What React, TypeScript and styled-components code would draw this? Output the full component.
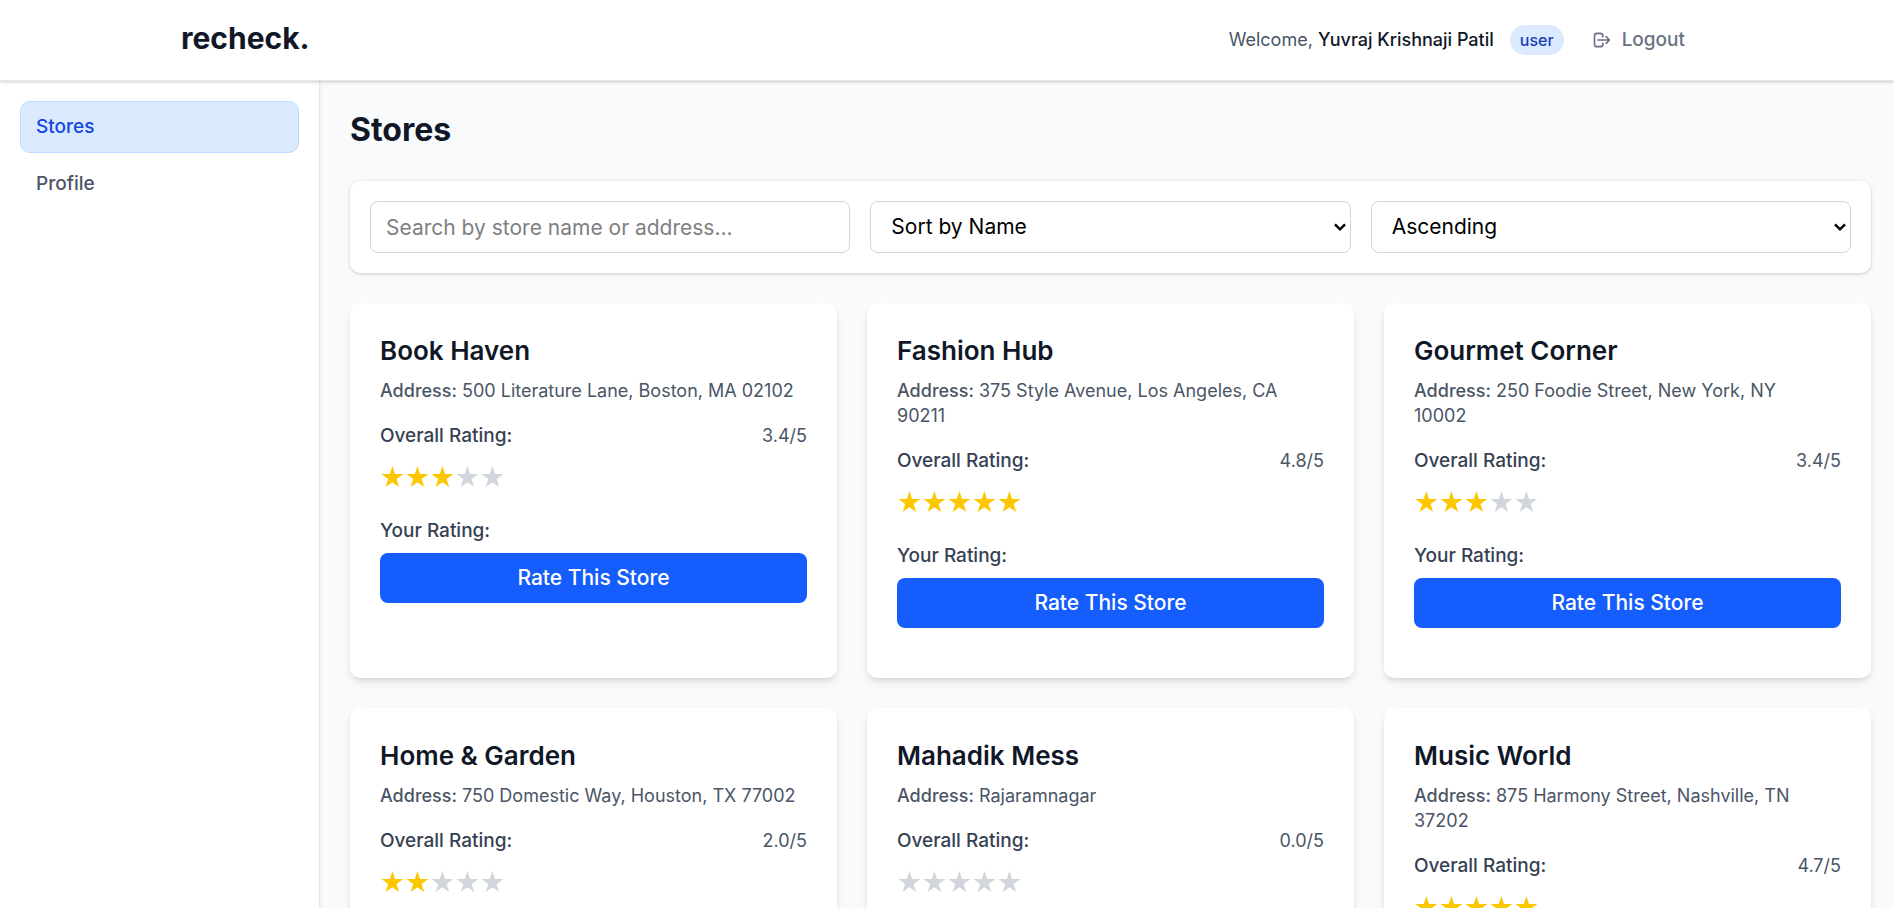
import React, { useState } from "react";
import styled, { createGlobalStyle } from "styled-components";

const GlobalStyle = createGlobalStyle`
  *, *::before, *::after { box-sizing: border-box; }
  body {
    margin: 0;
    background: #f9fafb;
    color: #101828;
    font-family: Inter, "Liberation Sans", sans-serif;
    font-size: 21px;
    line-height: 30px;
  }
  h1, h2, p { margin: 0; }
  button, input, select { font: inherit; color: inherit; }
`;

const Page = styled.div`
  display: flex;
  flex-direction: column;
  min-height: 100vh;
`;

const Header = styled.header`
  position: relative;
  background: #fff;
  border-bottom: 1px solid #e5e7eb;
  box-shadow: 0 1px 4px rgba(0, 0, 0, 0.1), 0 1px 3px rgba(0, 0, 0, 0.1);
`;

const HeaderInner = styled.div`
  display: flex;
  align-items: center;
  justify-content: space-between;
  max-width: 1600px;
  height: 80px;
  margin: 0 auto;
  padding: 0 62px 0 34px;
`;

const Logo = styled.a`
  padding-bottom: 4px;
  color: #101828;
  font-size: 30px;
  font-weight: 700;
  text-decoration: none;
`;

const Account = styled.div`
  display: flex;
  align-items: center;
  font-size: 18px;
`;

const Welcome = styled.span`
  color: #4a5565;
`;

const UserName = styled.span`
  color: #101828;
  font-weight: 500;
`;

const RoleBadge = styled.span`
  margin-left: 16px;
  padding: 5px 10px;
  border-radius: 15px;
  background: #dbeafe;
  color: #193cb8;
  font-size: 16px;
  font-weight: 500;
  line-height: 20px;
`;

const LogoutButton = styled.button`
  display: flex;
  align-items: center;
  gap: 10px;
  margin-left: 28px;
  padding: 0;
  border: 0;
  background: none;
  color: #6a7282;
  font-size: 19px;
  font-weight: 500;
  cursor: pointer;
`;

const Body = styled.div`
  display: flex;
  flex: 1;
`;

const Sidebar = styled.nav`
  display: flex;
  flex: 0 0 320px;
  flex-direction: column;
  gap: 5px;
  padding: 20px;
  border-right: 1px solid #e5e7eb;
  background: #fff;
  box-shadow: 0 1px 3px rgba(0, 0, 0, 0.1);
`;

const NavLink = styled.a<{ $active?: boolean }>`
  padding: 13px 15px;
  border: 1px solid ${(p) => (p.$active ? "#bedbff" : "transparent")};
  border-radius: 10px;
  background: ${(p) => (p.$active ? "#dbeafe" : "transparent")};
  color: ${(p) => (p.$active ? "#1447e6" : "#4a5565")};
  font-size: 19px;
  font-weight: 500;
  line-height: 24px;
  text-decoration: none;
`;

const Main = styled.main`
  flex: 1;
  min-width: 0;
  padding: 30px 23px 30px 30px;
`;

const Title = styled.h1`
  margin-bottom: 32px;
  font-size: 32px;
  font-weight: 700;
  line-height: 38px;
`;

const Filters = styled.form`
  display: grid;
  grid-template-columns: repeat(3, minmax(0, 1fr));
  gap: 20px;
  margin-bottom: 30px;
  padding: 20px;
  border-radius: 10px;
  background: #fff;
  box-shadow: 0 1px 4px rgba(0, 0, 0, 0.1), 0 1px 3px rgba(0, 0, 0, 0.1);
`;

const SearchInput = styled.input`
  width: 100%;
  height: 52px;
  padding: 0 15px;
  border: 1px solid #d1d5dc;
  border-radius: 8px;
  background: #fff;
  &::placeholder { color: #7f7f7f; opacity: 1; }
`;

const SelectBox = styled.div`
  display: grid;
  align-items: center;
  > * { grid-area: 1 / 1; }
  > svg {
    justify-self: end;
    margin-right: 5px;
    pointer-events: none;
  }
`;

const Select = styled.select`
  width: 100%;
  height: 52px;
  padding: 0 20px;
  border: 1px solid #d1d5dc;
  border-radius: 8px;
  appearance: none;
  background: #fff;
  color: #000;
`;

const StoreGrid = styled.div`
  display: grid;
  grid-template-columns: repeat(3, minmax(0, 1fr));
  gap: 30px;
`;

const Card = styled.article`
  padding: 30px 30px 50px;
  border-radius: 10px;
  background: #fff;
  box-shadow: 0 5px 8px -1px rgba(0, 0, 0, 0.1), 0 2px 5px -2px rgba(0, 0, 0, 0.1);
`;

const StoreName = styled.h2`
  margin-bottom: 10px;
  font-size: 26px;
  font-weight: 600;
  line-height: 35px;
`;

const Address = styled.p`
  margin-bottom: 20px;
  padding-right: 10px;
  color: #4a5565;
  font-size: 18px;
  line-height: 25px;
`;

const Strong = styled.span`
  font-weight: 500;
`;

const RatingRow = styled.div`
  display: flex;
  justify-content: space-between;
  margin-bottom: 10px;
  color: #4a5565;
  font-size: 18px;
  line-height: 25px;
`;

const Label = styled.span`
  display: block;
  color: #364153;
  font-size: 19px;
  font-weight: 500;
  line-height: 25px;
`;

const Stars = styled.div`
  display: flex;
  padding: 7px 0 8px;
  margin-bottom: 20px;
`;

const YourRating = styled.div`
  display: grid;
  gap: 10px;
`;

const RateButton = styled.button`
  width: 100%;
  height: 50px;
  padding: 0;
  border: 0;
  border-radius: 8px;
  background: #155dfc;
  color: #fff;
  font-weight: 500;
  cursor: pointer;
`;

interface Store {
  name: string;
  address: string;
  rating: number;
}

const stores: Store[] = [
  { name: "Book Haven", address: "500 Literature Lane, Boston, MA 02102", rating: 3.4 },
  { name: "Fashion Hub", address: "375 Style Avenue, Los Angeles, CA 90211", rating: 4.8 },
  { name: "Gourmet Corner", address: "250 Foodie Street, New York, NY 10002", rating: 3.4 },
  { name: "Home & Garden", address: "750 Domestic Way, Houston, TX 77002", rating: 2.0 },
  { name: "Mahadik Mess", address: "Rajaramnagar", rating: 0 },
  { name: "Music World", address: "875 Harmony Street, Nashville, TN 37202", rating: 4.7 },
];

const StarIcon = ({ filled }: { filled: boolean }) => (
  <svg width="25" height="25" viewBox="0 0 25 25" aria-hidden="true">
    <path
      d="M12.4 1.1 15 9.1H23.4L16.6 14.1 19.2 22.1 12.4 17.2 5.6 22.1 8.2 14.1 1.4 9.1H9.8Z"
      fill={filled ? "#fdc700" : "#d1d5dc"}
    />
  </svg>
);

const ChevronIcon = () => (
  <svg width="12" height="8" viewBox="0 0 12 8" fill="none" stroke="#000" strokeWidth="2.4" aria-hidden="true">
    <path d="M1 1.3 6 6.3 11 1.3" />
  </svg>
);

const LogoutIcon = () => (
  <svg width="20" height="20" viewBox="0 0 24 24" fill="none" stroke="currentColor" strokeWidth="2" strokeLinecap="round" strokeLinejoin="round" aria-hidden="true">
    <path d="M17 16l4-4m0 0l-4-4m4 4H7m6 4v1a3 3 0 01-3 3H6a3 3 0 01-3-3V7a3 3 0 013-3h4a3 3 0 013 3v1" />
  </svg>
);

const StoreCard = ({ store }: { store: Store }) => {
  const filled = Math.round(store.rating);
  return (
    <Card>
      <StoreName>{store.name}</StoreName>
      <Address>
        <Strong>Address:</Strong> {store.address}
      </Address>
      <RatingRow>
        <Label>Overall Rating:</Label>
        <span>{store.rating.toFixed(1)}/5</span>
      </RatingRow>
      <Stars role="img" aria-label={`${filled} of 5 stars`}>
        {[1, 2, 3, 4, 5].map((n) => (
          <StarIcon key={n} filled={n <= filled} />
        ))}
      </Stars>
      <YourRating>
        <Label>Your Rating:</Label>
        <RateButton type="button">Rate This Store</RateButton>
      </YourRating>
    </Card>
  );
};

export default function App() {
  const [query, setQuery] = useState("");
  return (
    <Page>
      <GlobalStyle />
      <Header>
        <HeaderInner>
          <Logo href="#">recheck.</Logo>
          <Account>
            <Welcome>
              Welcome, <UserName>Yuvraj Krishnaji Patil</UserName>
            </Welcome>
            <RoleBadge>user</RoleBadge>
            <LogoutButton type="button">
              <LogoutIcon />
              Logout
            </LogoutButton>
          </Account>
        </HeaderInner>
      </Header>
      <Body>
        <Sidebar aria-label="Main">
          <NavLink href="#stores" $active aria-current="page">Stores</NavLink>
          <NavLink href="#profile">Profile</NavLink>
        </Sidebar>
        <Main>
          <Title>Stores</Title>
          <Filters onSubmit={(e) => e.preventDefault()}>
            <SearchInput
              type="text"
              aria-label="Search stores"
              placeholder="Search by store name or address..."
              value={query}
              onChange={(e) => setQuery(e.target.value)}
            />
            <SelectBox>
              <Select aria-label="Sort by" defaultValue="name">
                <option value="name">Sort by Name</option>
                <option value="rating">Sort by Rating</option>
              </Select>
              <ChevronIcon />
            </SelectBox>
            <SelectBox>
              <Select aria-label="Sort order" defaultValue="asc">
                <option value="asc">Ascending</option>
                <option value="desc">Descending</option>
              </Select>
              <ChevronIcon />
            </SelectBox>
          </Filters>
          <StoreGrid>
            {stores.map((store) => (
              <StoreCard key={store.name} store={store} />
            ))}
          </StoreGrid>
        </Main>
      </Body>
    </Page>
  );
}
